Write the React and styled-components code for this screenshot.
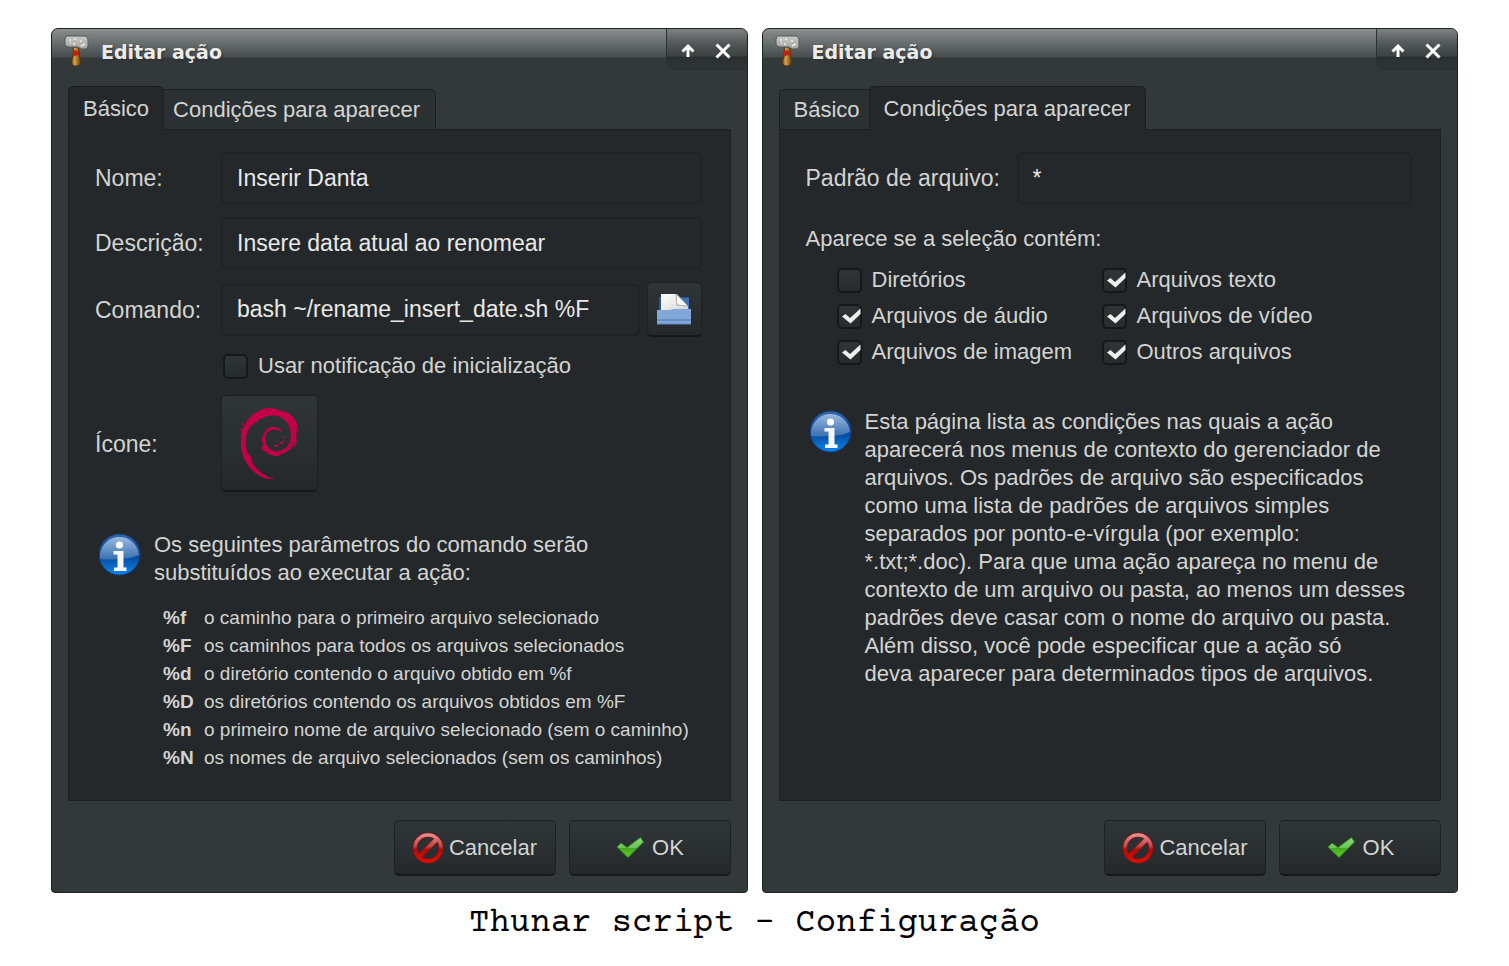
import React, { useId, useState } from "react";
import styled, { createGlobalStyle, css } from "styled-components";
import { SiDebian } from "react-icons/si";

const GlobalStyle = createGlobalStyle`
  *, *::before, *::after { box-sizing: border-box; }
  body {
    margin: 0;
    background: #fff;
    font-family: "Liberation Sans", Arial, sans-serif;
    font-size: 22px;
    line-height: 28px;
    color: #d3d4d2;
  }
  button, input { font-family: inherit; color: inherit; margin: 0; }
`;

const Page = styled.main`
  padding: 28px 51px 20px;
`;

const Windows = styled.div`
  display: grid;
  grid-template-columns: repeat(2, minmax(0, 1fr));
  gap: 14px;
`;

const Caption = styled.p`
  margin: 10px 0 0;
  text-align: center;
  color: #000;
  font-family: "Courier Prime", "Liberation Mono", monospace;
  font-size: 34px;
  line-height: 42px;
`;

const Frame = styled.section`
  display: flex;
  flex-direction: column;
  border: 1px solid #1e2223;
  border-radius: 7px 7px 4px 4px;
  background: #33393b;
  overflow: hidden;
`;

const TitleBar = styled.header`
  display: flex;
  align-items: flex-start;
  height: 57px;
  padding-left: 11px;
  background: linear-gradient(#8b8f8f 0, #6d7272 12px, #474d4f 28px, #33393b 29px);
`;

const Title = styled.h1`
  flex: 1;
  margin: 10px 0 0 10px;
  font: bold 19px/26px "DejaVu Sans", sans-serif;
  color: #ececea;
  text-shadow: 1px 1px 2px #2b2f30;
`;

const TitleActions = styled.div`
  display: flex;
  align-items: center;
  gap: 11px;
  height: 41px;
  padding: 4px 12px 0 9px;
  border: 1px solid #2b3031;
  border-width: 0 0 1px 1px;
  border-bottom-left-radius: 9px;
  background: linear-gradient(#73777788 0, #3c4142 27px, #2a2f30 28px, #2f3436 100%);
`;

const TitleButton = styled.button`
  display: grid;
  place-items: center;
  width: 24px;
  height: 24px;
  padding: 0;
  border: 0;
  background: none;
`;

const Body = styled.div`
  display: flex;
  flex: 1;
  flex-direction: column;
  padding: 0 16px 16px;
`;

const TabList = styled.div`
  display: flex;
  align-items: flex-end;
  margin-bottom: -1px;
`;

const Tab = styled.button`
  height: 41px;
  padding: ${(p) => (p.$first ? "0 9px 0 14px" : "0 15px 0 9px")};
  border: 1px solid #1d2021;
  background: #2b3032;
  font-size: 22px;
  line-height: 28px;
  border-radius: ${(p) => (p.$first ? "5px 0 0 0" : "0 5px 0 0")};
  border-left-width: ${(p) => (p.$first ? "1px" : "0")};
  border-right-width: ${(p) => (p.$first ? "0" : "1px")};
  ${(p) =>
    p.$active &&
    css`
      height: 44px;
      padding: 2px 14px 0;
      border-width: 1px;
      border-bottom-color: #24282a;
      border-radius: 5px 5px 0 0;
      background: #24282a;
      z-index: 1;
    `}
`;

const Panel = styled.div`
  flex: 1;
  padding: 22px 28px 28px 26px;
  border: 1px solid #1d2021;
  background: #24282a;
`;

const Form = styled.div`
  display: grid;
  grid-template-columns: ${(p) => p.$labels} minmax(0, 1fr);
  row-gap: 13px;
  align-items: center;
`;

const FieldLabel = styled.label`
  font-size: 23px;
`;

const TextInput = styled.input`
  width: 100%;
  min-width: 0;
  height: 52px;
  padding: 0 14px;
  border: 2px solid #1f2324;
  border-radius: 5px;
  background: #24282a;
  color: #e9e9e7;
  font-size: 23px;
`;

const CommandRow = styled.div`
  display: flex;
  align-items: center;
  gap: 7px;
`;

const raised = css`
  border: 1px solid #1d2122;
  border-bottom: 2px solid #151819;
  border-radius: 5px;
  background: linear-gradient(#303638, #24282a);
`;

const SquareButton = styled.button`
  ${raised}
  display: grid;
  flex: none;
  place-items: center;
  width: ${(p) => p.$size}px;
  height: ${(p) => p.$size}px;
  padding: 0;
`;

const CheckLabel = styled.label`
  display: flex;
  align-items: center;
  gap: 10px;
  height: 36px;
`;

const CheckMark = styled.span`
  display: grid;
  width: 25px;
  height: 25px;
  > * { grid-area: 1 / 1; }
  svg { z-index: 1; pointer-events: none; }
`;

const CheckInput = styled.input`
  appearance: none;
  width: 25px;
  height: 25px;
  border: 2px solid #151819;
  border-radius: 5px;
  background: linear-gradient(#2f3537, #262b2c);
`;

const NotifyOption = styled.div`
  grid-column: 2;
  margin: -2px 0;
  padding-left: 2px;
`;

const CheckGrid = styled.div`
  display: grid;
  grid-template-columns: 265px 1fr;
  padding: 9px 0 0 31px;
`;

const GroupTitle = styled.p`
  margin: 21px 0 0;
`;

const Info = styled.div`
  display: flex;
  align-items: flex-start;
  gap: 13px;
  margin-top: ${(p) => p.$top}px;
  padding-left: 4px;
  svg { flex: none; }
`;

const InfoText = styled.p`
  margin: 0;
  white-space: nowrap;
`;

const Params = styled.table`
  margin: 17px 0 0 68px;
  border-collapse: collapse;
  font-size: 19px;
  white-space: nowrap;
  th, td { padding: 0; text-align: left; }
  th { width: 41px; }
`;

const Footer = styled.footer`
  display: flex;
  justify-content: flex-end;
  gap: 13px;
  margin-top: 19px;
`;

const DialogButton = styled.button`
  ${raised}
  display: flex;
  align-items: center;
  justify-content: center;
  gap: 5px;
  width: 162px;
  height: 56px;
  padding: 0;
  font-size: 22px;
`;

function HammerIcon() {
  const id = useId();
  return (
    <svg width="28" height="38" viewBox="0 0 28 38" aria-hidden="true">
      <defs>
        <linearGradient id={id} x2="0" y2="1">
          <stop stopColor="#c9c9c7" />
          <stop offset="1" stopColor="#a4a4a1" />
        </linearGradient>
        <linearGradient id={`${id}h`}>
          <stop stopColor="#7d4d0a" />
          <stop offset=".35" stopColor="#dba04a" />
          <stop offset="1" stopColor="#6b3f08" />
        </linearGradient>
      </defs>
      <path d="M10.500 18h5l1 8 1 7q0 4-4.500 4t-4.500-4l1.500-7z" fill={`url(#${id}h)`} stroke="#53370f" />
      <path d="M10 21l5 1 2 5q-4-2-7 1z" fill="#c3200d" />
      <path d="M3 7h20l2 3v8l-2 2h-5l-3-2H5l-3-2v-6z" fill={`url(#${id})`} stroke="#55595a" />
      <path d="M6 11h2m3-1h2m4 2h2m-9 3h2m-5-1h1m10 3l4-2" stroke="#ecece9" strokeWidth="1.500" />
    </svg>
  );
}

function InfoIcon() {
  const id = useId();
  return (
    <svg width="42" height="46" viewBox="0 0 42 46" aria-hidden="true">
      <defs>
        <linearGradient id={id} x2="0" y2="1">
          <stop stopColor="#3567a8" />
          <stop offset=".55" stopColor="#07499a" />
          <stop offset="1" stopColor="#0c86f4" />
        </linearGradient>
        <linearGradient id={`${id}g`} x2="0" y2="1">
          <stop stopColor="#a8c3e4" />
          <stop offset="1" stopColor="#3f74b6" />
        </linearGradient>
      </defs>
      <circle cx="20.500" cy="23.500" r="20.500" fill={`url(#${id})`} stroke="#123f79" />
      <path d="M1 28a19.500 20 0 1 1 39-4Q31 28 19 28 9 29 1 28z" fill={`url(#${id}g)`} opacity=".9" />
      <circle cx="20.500" cy="14" r="3.600" fill="#fff" />
      <path d="M14.500 20h10v16.500h3v3.500H15v-3.500h3.500v-13h-4z" fill="#f4f6f8" />
    </svg>
  );
}

function FolderIcon() {
  const id = useId();
  return (
    <svg width="36" height="34" viewBox="0 0 36 34" aria-hidden="true">
      <defs>
        <linearGradient id={id} x2="1" y2="1">
          <stop stopColor="#fff" />
          <stop offset="1" stopColor="#d3d3d1" />
        </linearGradient>
      </defs>
      <path d="M3 5h30v16H3z" fill="#27568f" />
      <path d="M25 6h8v11h-8z" fill="#3c70b3" />
      <path d="M5 2h16l11 12v6H5z" fill={`url(#${id})`} />
      <path d="M20 2l12 12-11-1z" fill="#fbfbfb" stroke="#a8a8a6" />
      <path d="M1 18h13l3-1h18v15H1z" fill="#82a8da" />
      <path d="M1 28h34" stroke="#4773ad" />
      <path d="M1 32h34" stroke="#5f8cc7" />
    </svg>
  );
}

function CancelIcon() {
  const id = useId();
  return (
    <svg width="32" height="32" viewBox="0 0 32 32" aria-hidden="true">
      <defs>
        <linearGradient id={id} x1="0" y1="0" x2="0" y2="32" gradientUnits="userSpaceOnUse">
          <stop stopColor="#e5a0a0" />
          <stop offset=".46" stopColor="#c34040" />
          <stop offset=".54" stopColor="#b30b0b" />
          <stop offset="1" stopColor="#df1008" />
        </linearGradient>
      </defs>
      <circle cx="16" cy="16" r="13" fill="none" stroke="#8c1010" strokeWidth="5" />
      <path d="M7 25L25 7" stroke="#8c1010" strokeWidth="5.500" />
      <circle cx="16" cy="16" r="13" fill="none" stroke={`url(#${id})`} strokeWidth="3.500" />
      <path d="M7 25L25 7" stroke={`url(#${id})`} strokeWidth="4.200" />
    </svg>
  );
}

function OkIcon() {
  const id = useId();
  return (
    <svg width="32" height="32" viewBox="0 0 32 32" aria-hidden="true">
      <defs>
        <linearGradient id={id} x2="0" y2="1">
          <stop stopColor="#8ed67c" />
          <stop offset=".5" stopColor="#6cc358" />
          <stop offset=".55" stopColor="#45a825" />
          <stop offset="1" stopColor="#5fd11b" />
        </linearGradient>
      </defs>
      <path d="M2 15l4-4 6 4.500L25.500 5.500l3 4.500L13 25.500z" fill={`url(#${id})`} stroke="#2f8a1c" />
    </svg>
  );
}

function Check({ label, checked = false }) {
  const [on, setOn] = useState(checked);
  return (
    <CheckLabel>
      <CheckMark>
        <CheckInput type="checkbox" checked={on} onChange={(e) => setOn(e.target.checked)} />
        {on && (
          <svg width="25" height="25" viewBox="0 0 25 25" aria-hidden="true">
            <path d="M5 12.500l3.500-2.500 4.500 4L23.500 4.500V10l-10 9.500z" fill="#efefed" />
          </svg>
        )}
      </CheckMark>
      {label}
    </CheckLabel>
  );
}

function Lines({ lines }) {
  return lines.map((line, i) => (
    <React.Fragment key={line}>
      {i > 0 && <br />}
      {line}
    </React.Fragment>
  ));
}

function Dialog({ active, children }) {
  return (
    <Frame>
      <TitleBar>
        <HammerIcon />
        <Title>Editar ação</Title>
        <TitleActions>
          <TitleButton aria-label="Enrolar">
            <svg width="24" height="24" viewBox="0 0 24 24" fill="none" stroke="#fff" strokeWidth="3">
              <path d="M12 18V8M6.500 12.500L12 7l5.500 5.500" />
            </svg>
          </TitleButton>
          <TitleButton aria-label="Fechar">
            <svg width="24" height="24" viewBox="0 0 24 24" fill="none" stroke="#fff" strokeWidth="3">
              <path d="M5.500 5.500l13 13M18.500 5.500l-13 13" />
            </svg>
          </TitleButton>
        </TitleActions>
      </TitleBar>
      <Body>
        <TabList role="tablist">
          <Tab role="tab" aria-selected={active === 0} $first $active={active === 0}>
            Básico
          </Tab>
          <Tab role="tab" aria-selected={active === 1} $active={active === 1}>
            Condições para aparecer
          </Tab>
        </TabList>
        <Panel role="tabpanel">{children}</Panel>
        <Footer>
          <DialogButton>
            <CancelIcon />
            Cancelar
          </DialogButton>
          <DialogButton>
            <OkIcon />
            OK
          </DialogButton>
        </Footer>
      </Body>
    </Frame>
  );
}

const params = [
  ["%f", "o caminho para o primeiro arquivo selecionado"],
  ["%F", "os caminhos para todos os arquivos selecionados"],
  ["%d", "o diretório contendo o arquivo obtido em %f"],
  ["%D", "os diretórios contendo os arquivos obtidos em %F"],
  ["%n", "o primeiro nome de arquivo selecionado (sem o caminho)"],
  ["%N", "os nomes de arquivo selecionados (sem os caminhos)"],
];

const conditionsHelp = [
  "Esta página lista as condições nas quais a ação",
  "aparecerá nos menus de contexto do gerenciador de",
  "arquivos. Os padrões de arquivo são especificados",
  "como uma lista de padrões de arquivos simples",
  "separados por ponto-e-vírgula (por exemplo:",
  "*.txt;*.doc). Para que uma ação apareça no menu de",
  "contexto de um arquivo ou pasta, ao menos um desses",
  "padrões deve casar com o nome do arquivo ou pasta.",
  "Além disso, você pode especificar que a ação só",
  "deva aparecer para determinados tipos de arquivos.",
];

export default function App() {
  return (
    <Page>
      <GlobalStyle />
      <Windows>
        <Dialog active={0}>
          <Form $labels="126px">
            <FieldLabel htmlFor="name">Nome:</FieldLabel>
            <TextInput id="name" defaultValue="Inserir Danta" />
            <FieldLabel htmlFor="description">Descrição:</FieldLabel>
            <TextInput id="description" defaultValue="Insere data atual ao renomear" />
            <FieldLabel htmlFor="command">Comando:</FieldLabel>
            <CommandRow>
              <TextInput id="command" defaultValue="bash ~/rename_insert_date.sh %F" />
              <SquareButton $size={55} aria-label="Procurar arquivo">
                <FolderIcon />
              </SquareButton>
            </CommandRow>
            <NotifyOption>
              <Check label="Usar notificação de inicialização" />
            </NotifyOption>
            <FieldLabel htmlFor="icon">Ícone:</FieldLabel>
            <SquareButton id="icon" $size={97}>
              <SiDebian size={71} color="#c40046" stroke="#c40046" strokeWidth="0.4" />
            </SquareButton>
          </Form>
          <Info $top={39}>
            <InfoIcon />
            <InfoText>
              <Lines lines={["Os seguintes parâmetros do comando serão", "substituídos ao executar a ação:"]} />
            </InfoText>
          </Info>
          <Params>
            <tbody>
              {params.map(([code, text]) => (
                <tr key={code}>
                  <th scope="row">{code}</th>
                  <td>{text}</td>
                </tr>
              ))}
            </tbody>
          </Params>
        </Dialog>
        <Dialog active={1}>
          <Form $labels="211px">
            <FieldLabel htmlFor="pattern">Padrão de arquivo:</FieldLabel>
            <TextInput id="pattern" defaultValue="*" />
          </Form>
          <GroupTitle id="contains">Aparece se a seleção contém:</GroupTitle>
          <CheckGrid role="group" aria-labelledby="contains">
            <Check label="Diretórios" />
            <Check label="Arquivos texto" checked />
            <Check label="Arquivos de áudio" checked />
            <Check label="Arquivos de vídeo" checked />
            <Check label="Arquivos de imagem" checked />
            <Check label="Outros arquivos" checked />
          </CheckGrid>
          <Info $top={38}>
            <InfoIcon />
            <InfoText>
              <Lines lines={conditionsHelp} />
            </InfoText>
          </Info>
        </Dialog>
      </Windows>
      <Caption>Thunar script – Configuração</Caption>
    </Page>
  );
}
